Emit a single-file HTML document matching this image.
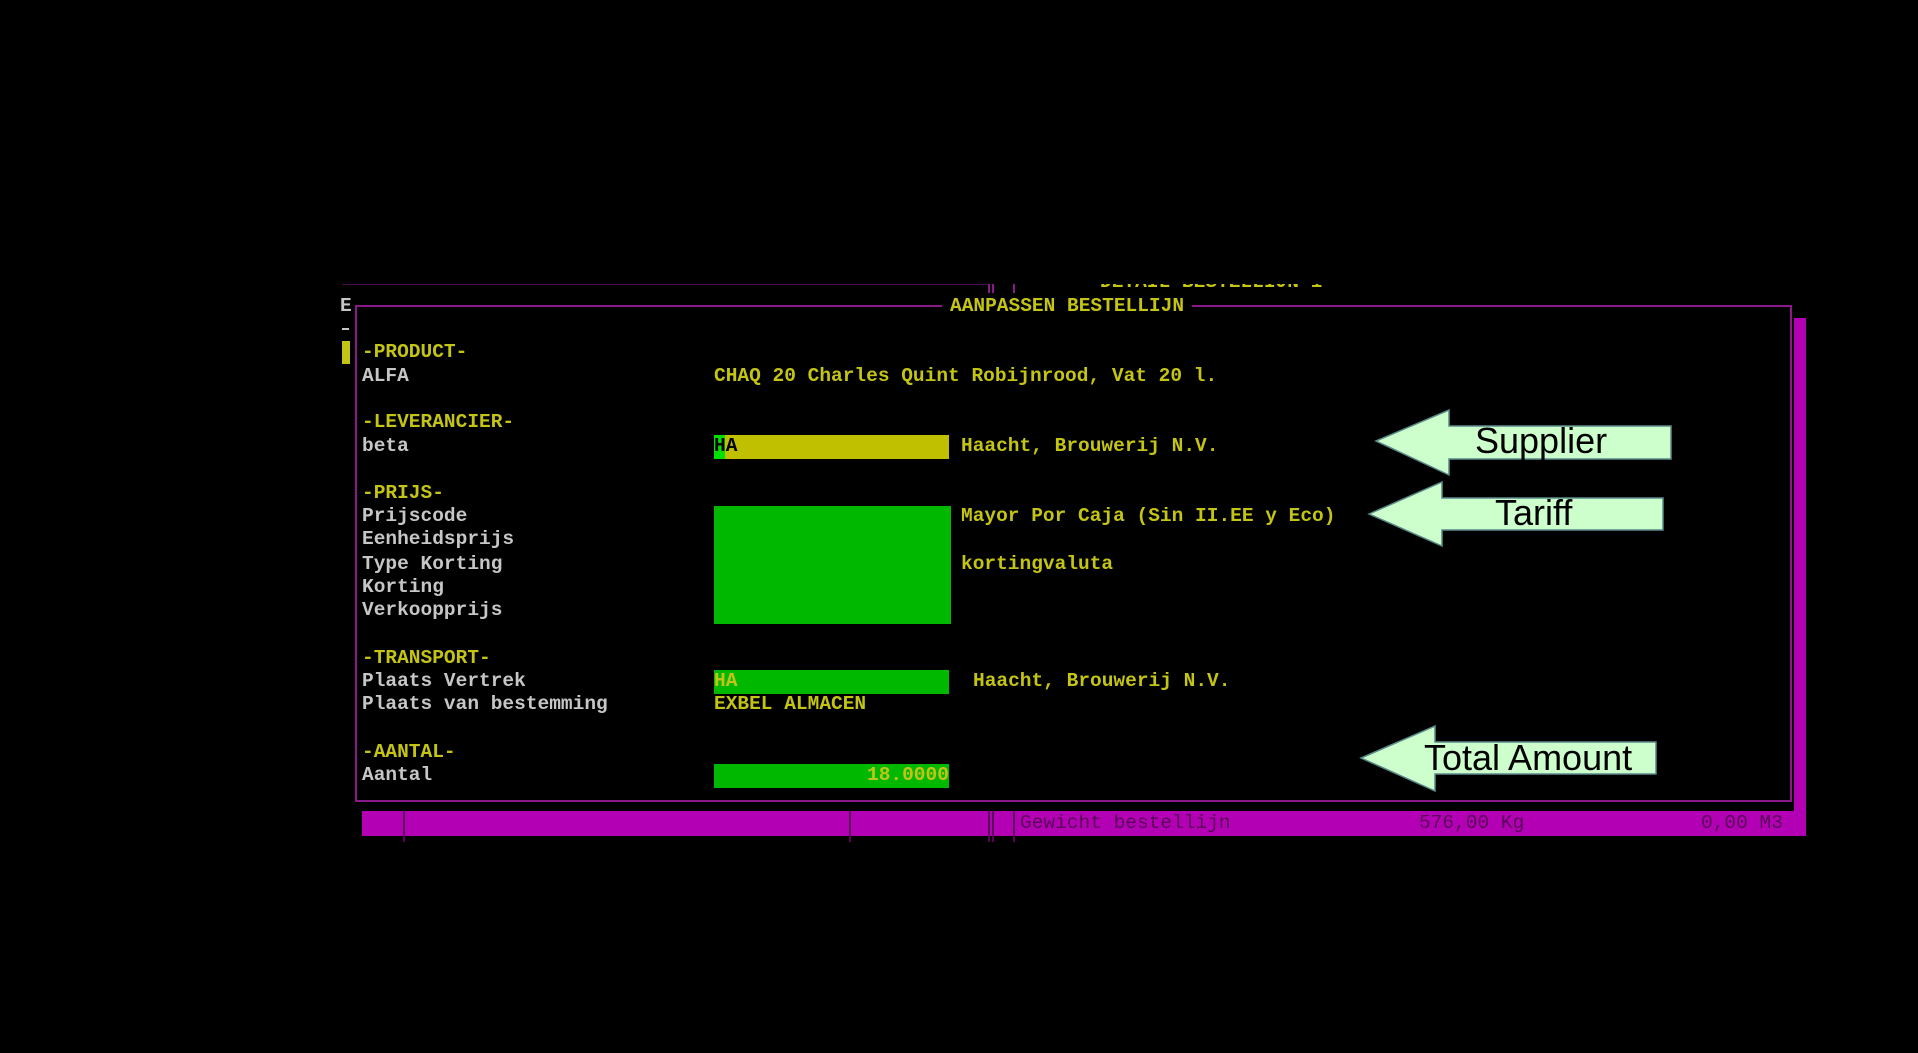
<!DOCTYPE html>
<html><head><meta charset="utf-8"><style>
html,body{margin:0;padding:0;background:#000;width:1918px;height:1053px;overflow:hidden;position:relative}
.t{position:absolute;font-family:"Liberation Mono",monospace;font-weight:bold;font-size:19.5px;line-height:24px;white-space:pre}
.y{color:#c4c414}.g{color:#c6c6c6}
.r{position:absolute}
.arr{position:absolute;left:0;top:0}
.lbl{position:absolute;font-family:"Liberation Sans",sans-serif;font-size:36px;color:#000;line-height:40px;white-space:pre}
</style></head><body>
<!-- background window remnants -->
<div class="r" style="left:342px;top:284px;width:648px;height:1px;background:#4a0a4a"></div>
<div class="r" style="left:988px;top:284px;width:2px;height:9px;background:#8a1a8a"></div>
<div class="r" style="left:992px;top:284px;width:2px;height:9px;background:#8a1a8a"></div>
<div class="r" style="left:1013px;top:284px;width:2px;height:9px;background:#8a1a8a"></div>
<div class="r" style="left:1100px;top:284px;width:230px;height:8px;overflow:hidden"><div class="t y" style="left:0;top:-14px">DETAIL BESTELLIJN 1</div></div>
<div class="t g" style="left:340px;top:294px">E</div>
<div class="r" style="left:342px;top:328px;width:7px;height:2px;background:#c6c6c6"></div>
<div class="r" style="left:342px;top:341px;width:8px;height:23px;background:#c4c414"></div>
<!-- right magenta column -->
<div class="r" style="left:1794px;top:318px;width:12px;height:518px;background:#b400b4"></div>
<!-- main box -->
<div class="r" style="left:355px;top:305px;width:1433px;height:493px;border:2px solid #8a1a8a;background:#000"></div>
<div class="t y" style="left:942px;top:294px;background:#000;padding:0 8px">AANPASSEN BESTELLIJN</div>

<div class="t y" style="left:362px;top:340px">-PRODUCT-</div>
<div class="t g" style="left:362px;top:364px">ALFA</div>
<div class="t y" style="left:714px;top:364px">CHAQ 20 Charles Quint Robijnrood, Vat 20 l.</div>
<div class="t y" style="left:362px;top:410px">-LEVERANCIER-</div>
<div class="t g" style="left:362px;top:434px">beta</div>
<div class="r" style="left:714px;top:435px;width:235px;height:24px;background:#c0c000"></div>
<div class="r" style="left:714px;top:435px;width:11px;height:24px;background:#00e000"></div>
<div class="t" style="left:714px;top:434px;color:#000">HA</div>
<div class="t y" style="left:961px;top:434px">Haacht, Brouwerij N.V.</div>
<div class="t y" style="left:362px;top:481px">-PRIJS-</div>
<div class="t g" style="left:362px;top:504px">Prijscode</div>
<div class="t g" style="left:362px;top:527px">Eenheidsprijs</div>
<div class="t g" style="left:362px;top:552px">Type Korting</div>
<div class="t g" style="left:362px;top:575px">Korting</div>
<div class="t g" style="left:362px;top:598px">Verkoopprijs</div>
<div class="r" style="left:714px;top:506px;width:237px;height:118px;background:#00b800"></div>
<div class="t y" style="left:961px;top:504px">Mayor Por Caja (Sin II.EE y Eco)</div>
<div class="t y" style="left:961px;top:552px">kortingvaluta</div>
<div class="t y" style="left:362px;top:646px">-TRANSPORT-</div>
<div class="t g" style="left:362px;top:669px">Plaats Vertrek</div>
<div class="r" style="left:714px;top:670px;width:235px;height:24px;background:#00b800"></div>
<div class="t y" style="left:714px;top:669px">HA</div>
<div class="t y" style="left:973px;top:669px">Haacht, Brouwerij N.V.</div>
<div class="t g" style="left:362px;top:692px">Plaats van bestemming</div>
<div class="t y" style="left:714px;top:692px">EXBEL ALMACEN</div>
<div class="t y" style="left:362px;top:740px">-AANTAL-</div>
<div class="t g" style="left:362px;top:763px">Aantal</div>
<div class="r" style="left:714px;top:764px;width:235px;height:24px;background:#00b800"></div>
<div class="t y" style="left:867px;top:763px">18.0000</div>

<!-- status bar -->
<div class="r" style="left:362px;top:811px;width:1444px;height:25px;background:#b400b4"></div>
<div class="r" style="left:403px;top:811px;width:2px;height:31px;background:#5a005a"></div>
<div class="r" style="left:849px;top:811px;width:2px;height:31px;background:#5a005a"></div>
<div class="r" style="left:988px;top:811px;width:2px;height:31px;background:#5a005a"></div>
<div class="r" style="left:992px;top:811px;width:2px;height:31px;background:#5a005a"></div>
<div class="r" style="left:1013px;top:811px;width:2px;height:31px;background:#5a005a"></div>
<div class="t" style="left:1020px;top:811px;color:#5a005a;font-weight:normal">Gewicht bestellijn</div>
<div class="t" style="left:1419px;top:811px;color:#5a005a;font-weight:normal">576,00 Kg</div>
<div class="t" style="left:1701px;top:811px;color:#5a005a;font-weight:normal">0,00 M3</div>

<!-- arrows -->
<svg class="arr" width="1918" height="1053">
<g fill="#ccffcc" stroke="#5a8a8a" stroke-width="1.5">
<polygon points="1376,441 1449,410 1449,426 1671,426 1671,459 1449,459 1449,475"/>
<polygon points="1369,514 1442,482 1442,498 1663,498 1663,530 1442,530 1442,546"/>
<polygon points="1361,758 1435,726 1435,742 1656,742 1656,774 1435,774 1435,791"/>
</g></svg>
<div class="lbl" style="left:1475px;top:421px">Supplier</div>
<div class="lbl" style="left:1495px;top:493px">Tariff</div>
<div class="lbl" style="left:1424px;top:738px">Total Amount</div>
</body></html>
